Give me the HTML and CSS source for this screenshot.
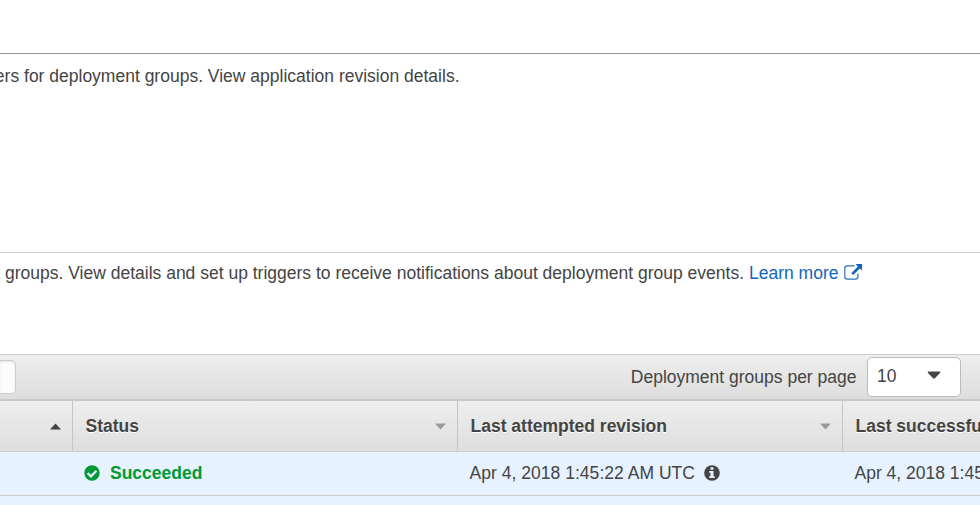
FILE: index.html
```html
<!DOCTYPE html>
<html lang="en">
<head>
<meta charset="utf-8">
<title>Deployment groups</title>
<link rel="stylesheet" href="styles.css">
</head>
<body>
<header class="title-area"></header>
<section class="intro">
  <p class="line intro-line"><span>ers for deployment groups. View application revision details.</span></p>
</section>
<section class="groups">
  <p class="line groups-line"><span class="copy">t groups. View details and set up triggers to receive notifications about deployment group events.</span><a class="learn">Learn more</a><svg class="external" viewBox="0 0 18 16" width="18" height="16"><path d="M10.500 1.800H3.500Q0.800 1.800 0.800 4.500V12.500Q0.800 15.200 3.500 15.200H11.500Q14 15.200 14 12.500V9.500" fill="none" stroke="#2a70bd" stroke-width="1.2"/><path d="M11.500 0H18V6.500L15.800 4.500L9.200 11L7.300 9.200L13.800 2.500Z" fill="#1166bb"/></svg></p>
</section>
<div class="toolbar">
  <div class="search"></div>
  <div class="pager">
    <span class="label">Deployment groups per page</span>
    <div class="select"><span>10</span><svg viewBox="0 0 14 8" width="14" height="8"><path d="M1.500 0.500H12.500Q14 0.500 13 2L8.200 7Q7 8 5.800 7L1 2Q0 0.500 1.500 0.500Z" fill="#444"/></svg></div>
  </div>
</div>
<div class="grid head">
  <div class="cell"><svg class="sort" viewBox="0 0 11 7" width="11" height="7"><path d="M0 6.500L5.500 0.500L11 6.500Z" fill="#444"/></svg></div>
  <div class="cell"><span>Status</span><svg class="sort" viewBox="0 0 11 7" width="11" height="7"><path d="M0 0.500H11L5.500 6.500Z" fill="#999"/></svg></div>
  <div class="cell"><span>Last attempted revision</span><svg class="sort" viewBox="0 0 11 7" width="11" height="7"><path d="M0 0.500H11L5.500 6.500Z" fill="#999"/></svg></div>
  <div class="cell"><span>Last successful revision</span></div>
</div>
<div class="grid row">
  <div class="cell"></div>
  <div class="cell success"><svg viewBox="0 0 16 16" width="16" height="16"><circle cx="8" cy="8" r="7.700" fill="#093"/><path d="M3.600 8.200L6.900 11.300L12.500 5.700" fill="none" stroke="#e6f2ff" stroke-width="2.300"/></svg><span>Succeeded</span></div>
  <div class="cell date"><span>Apr 4, 2018 1:45:22 AM UTC</span><svg viewBox="0 0 16 16" width="16" height="16"><circle cx="8" cy="8" r="7.800" fill="#444"/><path d="M6.500 2.300H9.500V4.800H6.500ZM5.200 6H9.500V11.200H10.800V13H5.200V11.200H6.500V7.800H5.200Z" fill="#e6f2ff"/></svg></div>
  <div class="cell"><span>Apr 4, 2018 1:45:22 AM UTC</span></div>
</div>
<div class="next-row"></div>
</body>
</html>
```
FILE: styles.css
```css
* { box-sizing: border-box; }
body {
  margin: 0;
  width: 980px;
  height: 505px;
  overflow: hidden;
  background: #fff;
  color: #444;
  font: 17.500px/24px "Liberation Sans", Arial, sans-serif;
  white-space: nowrap;
}
svg { display: block; flex: none; }
p { margin: 0; }
.title-area { height: 54px; border-bottom: 1px solid #999; }
.intro { height: 198px; padding-top: 10px; }
.line { display: flex; justify-content: flex-end; height: 24px; overflow: hidden; }
.intro-line { width: 459.500px; }
.groups { height: 102px; border-top: 1px solid #ccc; padding-top: 8px; }
.groups-line { width: 862px; }
.learn { color: #1166bb; margin: 0 5.500px 0 5px; }
.external { margin-top: 3px; }
.toolbar {
  display: flex;
  justify-content: space-between;
  height: 47px;
  border-top: 1px solid #ccc;
  border-bottom: 2px solid #c8c8c8;
  background: linear-gradient(#eee, #ddd);
}
.search {
  width: 16px;
  height: 34px;
  margin-top: 5px;
  border: 1px solid #ccc;
  border-left: 0;
  border-radius: 0 5px 5px 0;
  background: #fcfcfc;
  box-shadow: inset 0 1px 2px #e4e4e4;
}
.pager { display: flex; padding: 2px 19px 0 0; }
.label { margin: 8px 10.500px 0 0; }
.select {
  display: flex;
  justify-content: space-between;
  width: 94px;
  height: 40px;
  padding: 6px 19px 0 9px;
  border: 1px solid #bbb;
  border-radius: 5px;
  background: #fff;
}
.select svg { margin-top: 7px; }
.grid { display: grid; grid-template-columns: 72px 385px 385px 138px; }
.cell { display: flex; align-items: center; min-width: 0; overflow: hidden; }
.head {
  height: 51px;
  border-bottom: 1px solid #ccc;
  background: linear-gradient(#eee, #dedede);
  font-weight: bold;
  text-shadow: 0 1px 0 #fff;
}
.head .cell + .cell { border-left: 1px solid #c5c5c5; padding-left: 12.500px; }
.sort { margin: 0 11.500px 0 auto; }
.row { height: 44px; border-bottom: 1px solid #ccc; background: #e6f2ff; }
.row .cell { padding: 0 0 1px 12.500px; }
.row .success { color: #093; font-weight: bold; gap: 10px; padding-left: 12px; }
.date { gap: 9px; }
.date span { letter-spacing: 0.030px; }
.next-row { height: 9px; background: #e6f2ff; }
```
